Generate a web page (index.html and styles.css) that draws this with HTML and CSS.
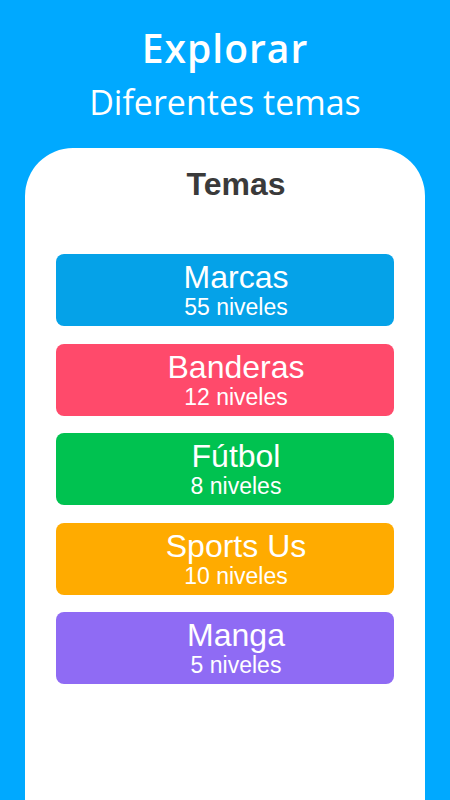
FILE: index.html
```html
<!DOCTYPE html>
<html lang="es">
  <head>
    <meta charset="UTF-8" />
    <meta name="viewport" content="width=device-width, initial-scale=1.0" />
    <title>Explorar</title>
    <link rel="stylesheet" href="styles.css">
  </head>
  <body>
    <header class="intro">
      <h1>Explorar</h1>
      <p>Diferentes temas</p>
    </header>

    <main class="phone">
      <h2>Temas</h2>
      <ul class="topics">
        <li class="topic marcas">
          <span class="name">Marcas</span>
          <span class="levels">55 niveles</span>
        </li>
        <li class="topic banderas">
          <span class="name">Banderas</span>
          <span class="levels">12 niveles</span>
        </li>
        <li class="topic futbol">
          <span class="name">Fútbol</span>
          <span class="levels">8 niveles</span>
        </li>
        <li class="topic sports">
          <span class="name">Sports Us</span>
          <span class="levels">10 niveles</span>
        </li>
        <li class="topic manga">
          <span class="name">Manga</span>
          <span class="levels">5 niveles</span>
        </li>
      </ul>
    </main>
  </body>
</html>
```

FILE: styles.css
```css
html,
body {
  height: 100%;
}
body {
  margin: 0;
  padding: 0;
  background-color: #00a9ff;
  font-family: "Liberation Sans", Arial, sans-serif;
  display: flex;
  flex-direction: column;
  overflow: hidden;
}

/* top text */
.intro {
  color: #fff;
  text-align: center;
  font-family: "Open Sans", Lato, sans-serif;
  padding-top: 26px;
  height: 124px;
  box-sizing: border-box;
}
.intro h1 {
  margin: 0;
  font-size: 39px;
  line-height: 44px;
  font-weight: 600;
  letter-spacing: 1px;
}
.intro p {
  margin: 0;
  margin-top: 12px;
  font-size: 34px;
  line-height: 40px;
  font-weight: 400;
}

/* white phone card */
.phone {
  flex: 1;
  margin: 24px 25px 0;
  background: #fff;
  border-radius: 48px 48px 0 0;
  padding: 18px 31px 0;
}
.phone h2 {
  margin: 0;
  padding-left: 22px;
  text-align: center;
  font-size: 32px;
  line-height: 36px;
  font-weight: 700;
  color: #3a3a3a;
}

.topics {
  list-style: none;
  margin: 52px 0 0;
  padding: 0;
  display: flex;
  flex-direction: column;
  gap: 17.5px;
}
.topic {
  height: 72px;
  box-sizing: border-box;
  padding-top: 7px;
  padding-left: 22px;
  border-radius: 8px;
  color: #fff;
  display: flex;
  flex-direction: column;
  align-items: center;
}
.topic .name {
  font-size: 32px;
  line-height: 32px;
}
.topic .levels {
  font-size: 23px;
  line-height: 24px;
  margin-top: 2px;
}

.marcas {
  background: #05a2e8;
}
.banderas {
  background: #ff4a6b;
}
.futbol {
  background: #00c250;
}
.sports {
  background: #ffab00;
}
.manga {
  background: #8f6bf4;
}
```
